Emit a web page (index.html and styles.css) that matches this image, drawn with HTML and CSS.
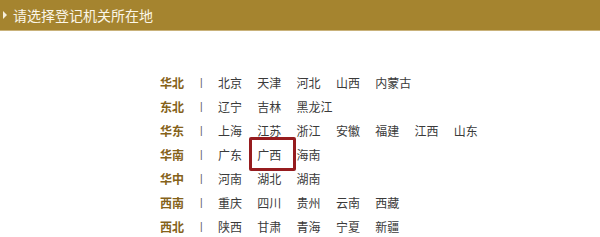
FILE: index.html
```html
<!DOCTYPE html>
<html lang="zh-CN">
<head>
    <meta charset="UTF-8">
    <title>请选择登记机关所在地</title>
    <link rel="stylesheet" href="styles.css">
</head>
<body>
    <div class="title-bar">
        <span class="arrow"></span>
        <span class="title-text">请选择登记机关所在地</span>
    </div>

    <div class="region-list">
        <div class="region-row">
            <span class="region-name">华北</span>
            <span class="sep">|</span>
            <a class="city">北京</a><a class="city">天津</a><a class="city">河北</a><a class="city">山西</a><a class="city">内蒙古</a>
        </div>
        <div class="region-row">
            <span class="region-name">东北</span>
            <span class="sep">|</span>
            <a class="city">辽宁</a><a class="city">吉林</a><a class="city">黑龙江</a>
        </div>
        <div class="region-row">
            <span class="region-name">华东</span>
            <span class="sep">|</span>
            <a class="city">上海</a><a class="city">江苏</a><a class="city">浙江</a><a class="city">安徽</a><a class="city">福建</a><a class="city">江西</a><a class="city">山东</a>
        </div>
        <div class="region-row">
            <span class="region-name">华南</span>
            <span class="sep">|</span>
            <a class="city">广东</a><a class="city selected">广西</a><a class="city">海南</a>
        </div>
        <div class="region-row">
            <span class="region-name">华中</span>
            <span class="sep">|</span>
            <a class="city">河南</a><a class="city">湖北</a><a class="city">湖南</a>
        </div>
        <div class="region-row">
            <span class="region-name">西南</span>
            <span class="sep">|</span>
            <a class="city">重庆</a><a class="city">四川</a><a class="city">贵州</a><a class="city">云南</a><a class="city">西藏</a>
        </div>
        <div class="region-row">
            <span class="region-name">西北</span>
            <span class="sep">|</span>
            <a class="city">陕西</a><a class="city">甘肃</a><a class="city">青海</a><a class="city">宁夏</a><a class="city">新疆</a>
        </div>
    </div>
</body>
</html>
```

FILE: styles.css
```css
* {
    margin: 0;
    padding: 0;
    box-sizing: border-box;
}

body {
    font-family: 'Liberation Sans', 'Noto Sans CJK SC', sans-serif;
    background: #fff;
    color: #333;
    width: 600px;
    height: 237px;
    overflow: hidden;
}

/* 标题栏 */
.title-bar {
    height: 31px;
    background: #a5842f;
    display: flex;
    align-items: center;
    padding-left: 3px;
    border-bottom: 1px solid #c9b27a;
}

.arrow {
    width: 0;
    height: 0;
    border-left: 4px solid #f6eedb;
    border-top: 4px solid transparent;
    border-bottom: 4px solid transparent;
    margin-right: 6px;
}

.title-text {
    color: #fbf6e8;
    font-size: 14px;
}

/* 地区列表 */
.region-list {
    padding: 39px 0 0 160px;
    display: flex;
    flex-direction: column;
}

.region-row {
    display: flex;
    align-items: center;
    height: 24px;
    font-size: 12px;
}

.region-name {
    width: 40px;
    font-weight: bold;
    color: #85621a;
}

.sep {
    width: 18px;
    color: #555;
    font-size: 10px;
}

.city {
    width: 39.3px;
    color: #3a3a3a;
    white-space: nowrap;
    position: relative;
}

.city.selected::after {
    content: '';
    position: absolute;
    left: -8px;
    top: -9px;
    width: 41px;
    height: 28px;
    border: 3px solid #961c1f;
    border-radius: 2px;
}
```
